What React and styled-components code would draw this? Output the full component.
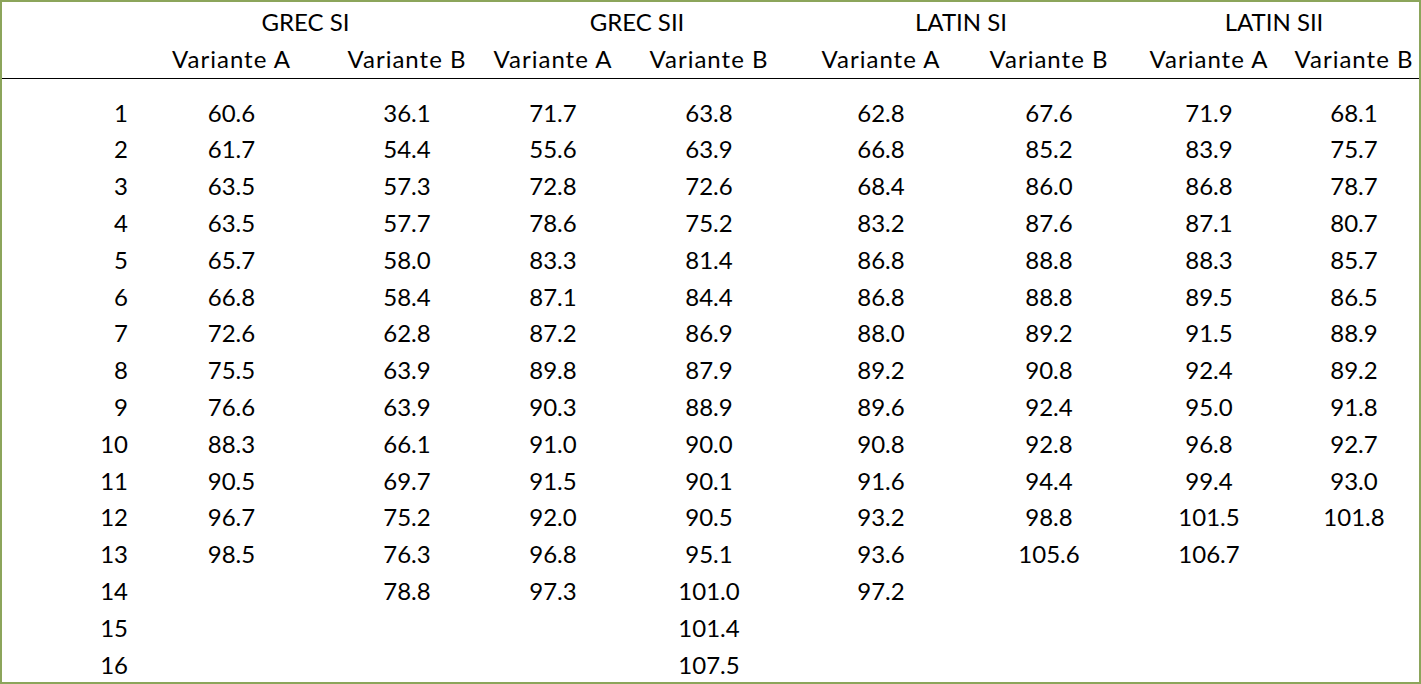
import React from "react";
import styled, { createGlobalStyle } from "styled-components";

const GlobalStyle = createGlobalStyle`
  html, body {
    margin: 0;
    padding: 0;
    background: #ffffff;
  }
  body {
    font-family: Lato, "Liberation Sans", sans-serif;
    color: #000;
  }
`;

const COLS = "128px 203px 148px 144px 168px 176px 160px 160px 130px";

const Frame = styled.div`
  width: 1421px;
  height: 684px;
  box-sizing: border-box;
  border: 2px solid #8ca55b;
  background: #fff;
  overflow: hidden;
`;

const Grid = styled.div`
  display: grid;
  grid-template-columns: ${COLS};
  grid-auto-rows: 36.8px;
  font-size: 24px;
  line-height: 36.8px;
`;

const HeaderBlock = styled(Grid)`
  padding-top: 2px;
  border-bottom: 1px solid #000;
`;

const Body = styled(Grid)`
  padding-top: 16px;
`;

const Group = styled.div`
  grid-column: span 2;
  text-align: center;
  white-space: nowrap;
`;

const Cell = styled.div`
  text-align: ${(p) => p.$align || "center"};
  padding-right: ${(p) => (p.$align === "right" ? "2px" : "0")};
  letter-spacing: ${(p) => (p.$wide ? "1px" : "normal")};
  white-space: nowrap;
`;

const groups = ["GREC SI", "GREC SII", "LATIN SI", "LATIN SII"];

const columns = [
  ["60.6", "61.7", "63.5", "63.5", "65.7", "66.8", "72.6", "75.5", "76.6", "88.3", "90.5", "96.7", "98.5"],
  ["36.1", "54.4", "57.3", "57.7", "58.0", "58.4", "62.8", "63.9", "63.9", "66.1", "69.7", "75.2", "76.3", "78.8"],
  ["71.7", "55.6", "72.8", "78.6", "83.3", "87.1", "87.2", "89.8", "90.3", "91.0", "91.5", "92.0", "96.8", "97.3"],
  ["63.8", "63.9", "72.6", "75.2", "81.4", "84.4", "86.9", "87.9", "88.9", "90.0", "90.1", "90.5", "95.1", "101.0", "101.4", "107.5"],
  ["62.8", "66.8", "68.4", "83.2", "86.8", "86.8", "88.0", "89.2", "89.6", "90.8", "91.6", "93.2", "93.6", "97.2"],
  ["67.6", "85.2", "86.0", "87.6", "88.8", "88.8", "89.2", "90.8", "92.4", "92.8", "94.4", "98.8", "105.6"],
  ["71.9", "83.9", "86.8", "87.1", "88.3", "89.5", "91.5", "92.4", "95.0", "96.8", "99.4", "101.5", "106.7"],
  ["68.1", "75.7", "78.7", "80.7", "85.7", "86.5", "88.9", "89.2", "91.8", "92.7", "93.0", "101.8"],
];

const rows = Array.from({ length: 16 }, (_, i) => i);

export default function App() {
  return (
    <>
      <GlobalStyle />
      <Frame>
        <HeaderBlock>
          <Cell />
          {groups.map((g) => (
            <Group key={g}>{g}</Group>
          ))}
          <Cell />
          {groups.map((g) => (
            <React.Fragment key={g}>
              <Cell $wide>Variante A</Cell>
              <Cell $wide>Variante B</Cell>
            </React.Fragment>
          ))}
        </HeaderBlock>
        <Body>
          {rows.map((r) => (
            <React.Fragment key={r}>
              <Cell $align="right">{r + 1}</Cell>
              {columns.map((col, c) => (
                <Cell key={c}>{col[r] || ""}</Cell>
              ))}
            </React.Fragment>
          ))}
        </Body>
      </Frame>
    </>
  );
}
